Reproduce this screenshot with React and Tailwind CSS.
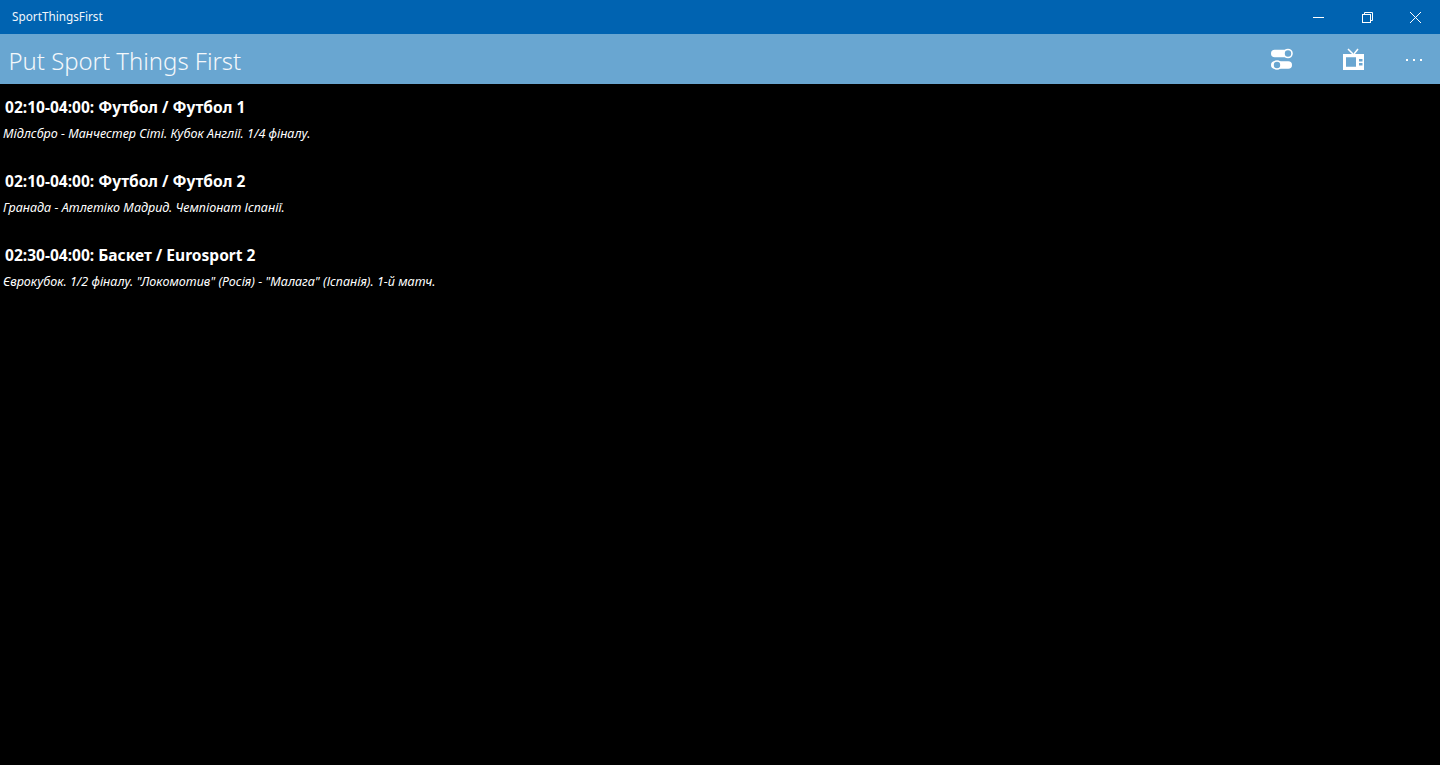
const font = { fontFamily: '"Noto Sans", "Open Sans", sans-serif' };

const rows = [
  ["02:10-04:00: Футбол / Футбол 1", "Мідлсбро - Манчестер Сіті. Кубок Англії. 1/4 фіналу."],
  ["02:10-04:00: Футбол / Футбол 2", "Гранада - Атлетіко Мадрид. Чемпіонат Іспанії."],
  ["02:30-04:00: Баскет / Eurosport 2", "Єврокубок. 1/2 фіналу. \"Локомотив\" (Росія) - \"Малага\" (Іспанія). 1-й матч."],
];

function Toggles() {
  return (
    <svg width="24" height="24" viewBox="0 0 24 24">
      <rect x="1" y="2.75" width="21" height="7.5" rx="3.75" fill="#fff" />
      <circle cx="18" cy="6.5" r="4" fill="#69a6d1" stroke="#fff" strokeWidth="1.6" />
      <rect x="1" y="14.25" width="21" height="7.5" rx="3.75" fill="#fff" />
      <circle cx="7" cy="18" r="4" fill="#69a6d1" stroke="#fff" strokeWidth="1.6" />
    </svg>
  );
}

function Tv() {
  return (
    <svg width="24" height="24" viewBox="0 0 24 24">
      <path d="M6 2 L11 7 M16 2 L12 7" stroke="#fff" strokeWidth="1.5" fill="none" />
      <path fillRule="evenodd" fill="#fff" d="M1 7h21v16H1z M4 10.3v9.4h10v-9.4z M17 12v2.5h3.5V12z M17 16v2.5h3.5V16z" />
    </svg>
  );
}

export default function App() {
  return (
    <div className="w-[1440px] h-[765px] bg-black flex flex-col overflow-hidden text-white" style={font}>
      <div className="h-[34px] bg-[#0063b1] flex items-center justify-between shrink-0">
        <span className="pl-[12px] text-[11.75px] text-[#f0f6fb]">SportThingsFirst</span>
        <div className="flex items-center pr-[1px]">
          <div className="w-[49px] h-[34px] flex items-center justify-center">
            <svg width="11" height="11" viewBox="0 0 11 11"><path d="M0 5.5h11" stroke="#fff" strokeWidth="1" /></svg>
          </div>
          <div className="w-[48px] h-[34px] flex items-center justify-center">
            <svg width="11" height="11" viewBox="0 0 11 11" fill="none" stroke="#fff" strokeWidth="1"><rect x="0.5" y="2.5" width="8" height="8" /><path d="M2.5 2.5V0.5h8v8h-2" /></svg>
          </div>
          <div className="w-[48px] h-[34px] flex items-center justify-center">
            <svg width="11" height="11" viewBox="0 0 11 11"><path d="M0 0L11 11M11 0L0 11" stroke="#fff" strokeWidth="1" /></svg>
          </div>
        </div>
      </div>
      <div className="h-[50px] bg-[#69a6d1] flex items-center justify-between shrink-0">
        <span className="pl-[8.5px] pt-[3px] text-[23.9px] font-light text-[#f4f8fb]">Put Sport Things First</span>
        <div className="flex items-center">
          <div className="w-[72px] flex justify-center"><Toggles /></div>
          <div className="w-[72px] flex justify-center"><Tv /></div>
          <div className="w-[50px] flex justify-center gap-[5px] pr-[2px] pt-[2px]">
            <span className="w-[2px] h-[2px] bg-white" />
            <span className="w-[2px] h-[2px] bg-white" />
            <span className="w-[2px] h-[2px] bg-white" />
          </div>
        </div>
      </div>
      <div className="flex flex-col pt-[10px]">
        {rows.map(([title, sub]) => (
          <div key={title} className="h-[74px] flex flex-col">
            <div className="pl-[5px] h-[26px] leading-[26px] text-[15.55px] font-bold whitespace-nowrap">{title}</div>
            <div className="pl-[3px] h-[27px] leading-[27px] text-[12.55px] italic whitespace-nowrap">{sub}</div>
          </div>
        ))}
      </div>
    </div>
  );
}
